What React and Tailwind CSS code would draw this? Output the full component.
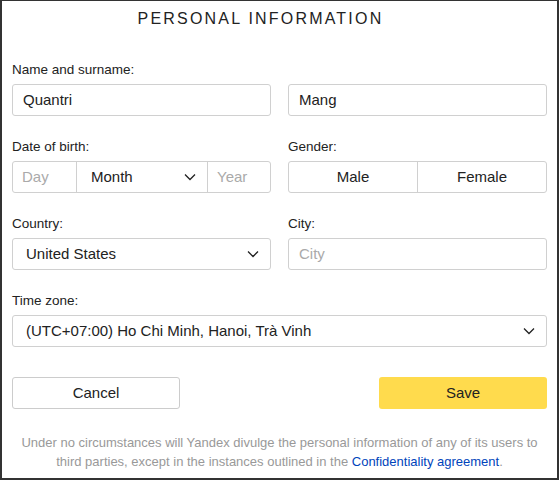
import React from "react";

function Chevron() {
  return (
    <svg width="12" height="8" viewBox="0 0 12 8" className="shrink-0">
      <path d="M1 1.5 L6 6.5 L11 1.5" fill="none" stroke="#222" strokeWidth="1.3" />
    </svg>
  );
}

function Label({ children }) {
  return <div className="mb-[6px] text-[13.5px] leading-[16px] text-[#222]">{children}</div>;
}

function Field({ value, placeholder }) {
  return (
    <div className="flex h-[32px] items-center rounded-[3px] border border-[#d0d0d0] px-[10px] text-[15px]">
      {value ? <span className="text-[#222]">{value}</span> : <span className="text-[#aaa]">{placeholder}</span>}
    </div>
  );
}

function Select({ value }) {
  return (
    <div className="flex h-[32px] items-center justify-between rounded-[3px] border border-[#d0d0d0] pl-[13px] pr-[11px] text-[15px] text-[#222]">
      <span>{value}</span>
      <Chevron />
    </div>
  );
}

export default function App() {
  return (
    <div
      className="h-[480px] w-[559px] border-x-2 border-b-2 border-t border-[#333] bg-white"
      style={{ fontFamily: '"Liberation Sans", Arial, sans-serif' }}
    >
      <div className="pr-[38px] pt-[8px] text-center text-[16px] leading-[20px] tracking-[2.2px] text-[#222]">
        PERSONAL INFORMATION
      </div>
      <div className="px-[10px] pt-[33px]">
        <Label>Name and surname:</Label>
        <div className="grid grid-cols-2 gap-x-[17px]">
          <Field value="Quantri" />
          <Field value="Mang" />
        </div>

        <div className="mt-[23px] grid grid-cols-2 gap-x-[17px]">
          <div>
            <Label>Date of birth:</Label>
            <div className="flex h-[32px] rounded-[3px] border border-[#d0d0d0] text-[15px]">
              <div className="flex w-[64px] items-center border-r border-[#d0d0d0] px-[9px] text-[#aaa]">Day</div>
              <div className="flex w-[131px] items-center justify-between border-r border-[#d0d0d0] pl-[14px] pr-[11px] text-[#222]">
                <span>Month</span>
                <Chevron />
              </div>
              <div className="flex flex-1 items-center px-[9px] text-[#aaa]">Year</div>
            </div>
          </div>
          <div>
            <Label>Gender:</Label>
            <div className="flex h-[32px] rounded-[3px] border border-[#d0d0d0] text-[15px] text-[#222]">
              <div className="flex w-[129px] items-center justify-center border-r border-[#d0d0d0]">Male</div>
              <div className="flex flex-1 items-center justify-center">Female</div>
            </div>
          </div>
        </div>

        <div className="mt-[23px] grid grid-cols-2 gap-x-[17px]">
          <div>
            <Label>Country:</Label>
            <Select value="United States" />
          </div>
          <div>
            <Label>City:</Label>
            <Field placeholder="City" />
          </div>
        </div>

        <div className="mt-[23px]">
          <Label>Time zone:</Label>
          <Select value="(UTC+07:00) Ho Chi Minh, Hanoi, Trà Vinh" />
        </div>

        <div className="mt-[30px] flex justify-between">
          <button className="h-[32px] w-[168px] rounded-[3px] border border-[#ccc] bg-white text-[15px] text-[#222]">
            Cancel
          </button>
          <button className="h-[32px] w-[168px] rounded-[3px] bg-[#ffdb4d] text-[15px] text-[#222]">Save</button>
        </div>

        <p className="mt-[24px] px-[6px] text-center text-[13px] leading-[19px] text-[#999]">
          Under no circumstances will Yandex divulge the personal information of any of its users to third parties,
          except in the instances outlined in the <span className="text-[#04b]">Confidentiality agreement</span>.
        </p>
      </div>
    </div>
  );
}
